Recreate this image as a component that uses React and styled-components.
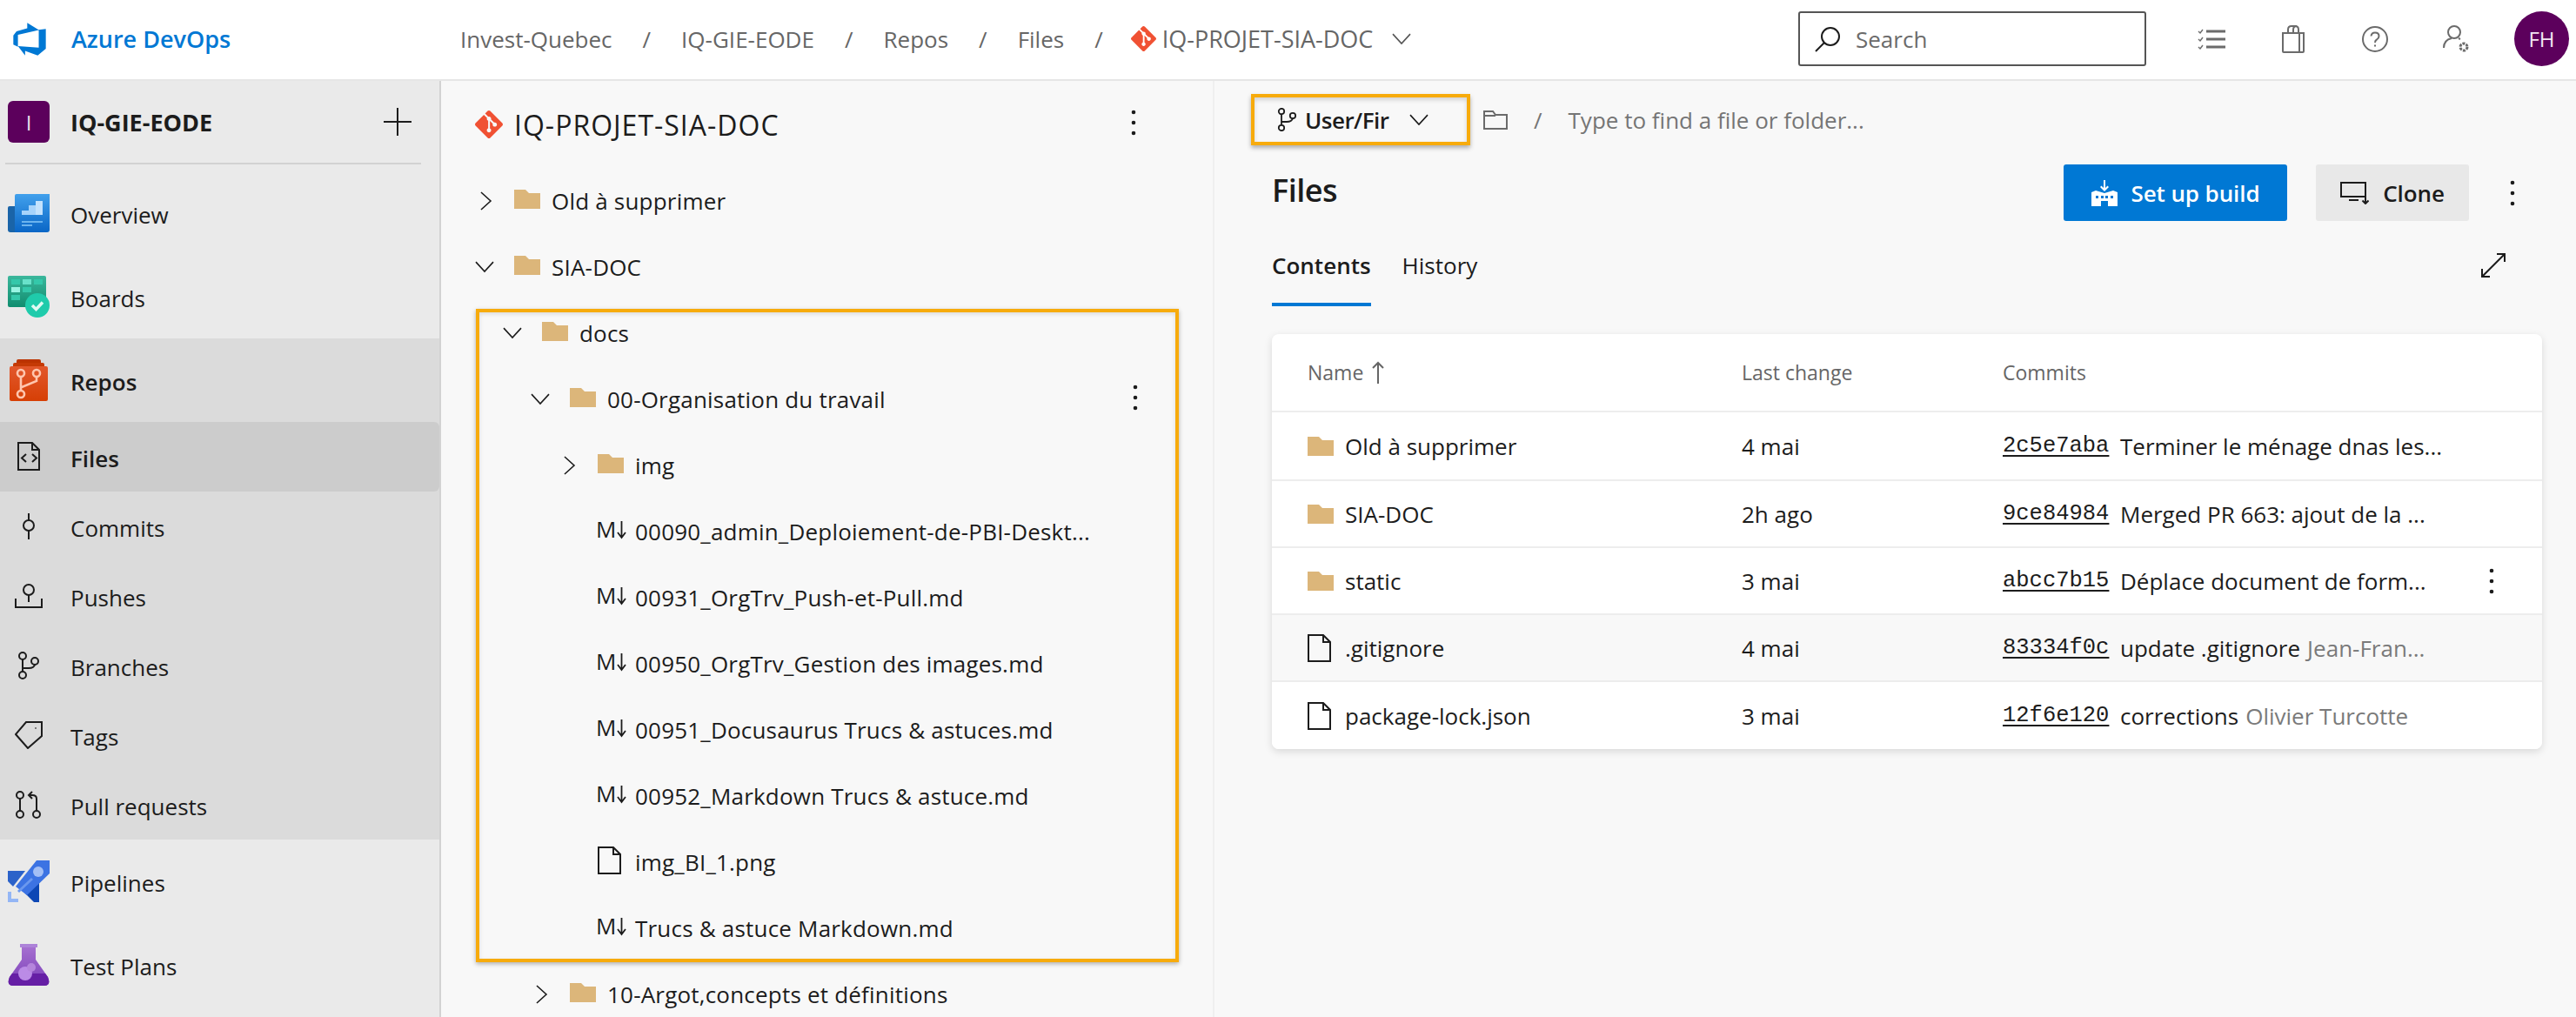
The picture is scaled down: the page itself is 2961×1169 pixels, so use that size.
import React from 'react'
import styled, { createGlobalStyle } from 'styled-components'
import { SiGit } from 'react-icons/si'

const GlobalStyle = createGlobalStyle`
  html, body {
    margin: 0;
    padding: 0;
    background: #fff;
    font-family: 'Open Sans', 'Liberation Sans', sans-serif;
    color: #1c1c1c;
  }
  * {
    box-sizing: border-box;
  }
`

const Page = styled.div`
  width: 2961px;
  height: 1169px;
  overflow: hidden;
  display: flex;
  flex-direction: column;
`

/* top bar */
const TopBar = styled.header`
  height: 93px;
  flex: none;
  display: flex;
  align-items: center;
  background: #fff;
  border-bottom: 2px solid #e6e6e6;
  padding: 0 8px 2px 13px;
`

const Brand = styled.div`
  width: 516px;
  flex: none;
  display: flex;
  align-items: center;
  gap: 27px;
  color: #0078d4;
  font-size: 27px;
  font-weight: 600;
`

const Crumbs = styled.nav`
  display: flex;
  align-items: center;
  gap: 35px;
  color: #666;
  font-size: 26px;
`

const CrumbRepo = styled.span`
  display: flex;
  align-items: center;
  gap: 7px;
  margin-left: -3px;
  font-size: 27px;
  svg:last-child {
    margin-left: 15px;
  }
`

const GitMark = styled(SiGit)`
  color: #f05133;
  flex: none;
`

const SearchBox = styled.div`
  margin-left: auto;
  width: 400px;
  height: 63px;
  display: flex;
  align-items: center;
  gap: 17px;
  padding-left: 17px;
  border: 2px solid #555;
  border-radius: 3px;
  color: #6b6b6b;
  font-size: 26px;
`

const TopIcons = styled.div`
  display: flex;
  margin-left: 28px;
`

const TopIcon = styled.div`
  width: 94px;
  display: flex;
  justify-content: center;
  align-items: center;
  color: #6b6b6b;
`

const Avatar = styled.div`
  width: 63px;
  height: 63px;
  margin-left: 19px;
  border-radius: 50%;
  background: #5c005c;
  color: #f3e6f3;
  display: flex;
  align-items: center;
  justify-content: center;
  font-size: 24px;
`

const Body = styled.div`
  flex: 1;
  min-height: 0;
  display: flex;
`

/* left navigation */
const Sidebar = styled.aside`
  width: 507px;
  flex: none;
  background: #eaeaea;
  border-right: 2px solid #d2d2d2;
  display: flex;
  flex-direction: column;
`

const ProjectRow = styled.div`
  height: 94px;
  display: flex;
  align-items: center;
  padding: 0 32px 0 9px;
  font-size: 27px;
  font-weight: 700;
  gap: 24px;
`

const ProjectBadge = styled.div`
  width: 48px;
  height: 48px;
  flex: none;
  border-radius: 6px;
  background: #5c005c;
  color: #eadcea;
  display: flex;
  align-items: center;
  justify-content: center;
  font-size: 24px;
  font-weight: 400;
`

const PlusIcon = styled.svg`
  margin-left: auto;
`

const NavDivider = styled.div`
  height: 2px;
  margin: 0 21px 8px 6px;
  background: #d2d2d2;
`

const NavGroup = styled.div`
  background: #dbdbdb;
`

const NavItem = styled.div`
  height: ${(p) => (p.$sub ? '80px' : '96px')};
  display: flex;
  align-items: center;
  font-size: 26px;
  font-weight: ${(p) => (p.$strong ? 600 : 400)};
  background: ${(p) => (p.$selected ? '#cccccc' : 'transparent')};
  border-radius: ${(p) => (p.$selected ? '0 6px 6px 0' : '0')};
`

const NavIconCell = styled.div`
  width: 81px;
  flex: none;
  display: flex;
  justify-content: center;
  padding-right: 15px;
`

const NavLabel = styled.span`
  padding-top: 4px;
`

/* tree */
const TreePanel = styled.section`
  width: 889px;
  flex: none;
  background: #f8f8f8;
  border-right: 2px solid #efefef;
  overflow: hidden;
`

const TreeTitle = styled.div`
  height: 100px;
  display: flex;
  align-items: center;
  padding: 0 88px 0 39px;
  gap: 13px;
  font-size: 32px;
  letter-spacing: 1px;
`

const Dots = ({ className }) => (
  <svg className={className} width="6" height="30" viewBox="0 0 6 30" fill="#1c1c1c">
    <circle cx="3" cy="3" r="2.3" />
    <circle cx="3" cy="15" r="2.3" />
    <circle cx="3" cy="27" r="2.3" />
  </svg>
)

const MoreButton = styled(Dots)`
  flex: none;
  margin-left: auto;
  margin-bottom: 4px;
`

const TreeList = styled.div`
  position: relative;
`

const TreeRow = styled.div`
  height: 76px;
  display: flex;
  align-items: center;
  padding-left: ${(p) => 33 + p.$level * 32}px;
  padding-right: 86px;
  font-size: 26px;
  letter-spacing: 0.2px;
  white-space: nowrap;
`

const ToggleCell = styled.div`
  width: 51px;
  flex: none;
  display: flex;
  padding-left: ${(p) => (p.$open ? 6 : 11)}px;
`

const EntryIcon = styled.div`
  width: 43px;
  flex: none;
  display: flex;
  margin-bottom: 4px;
`

const MdGlyph = styled.div`
  width: 43px;
  margin-left: -2px;
  margin-right: 2px;
  flex: none;
  display: flex;
  align-items: center;
  font-size: 26px;
  margin-bottom: 6px;
`

const Highlight = styled.div`
  position: absolute;
  top: ${(p) => p.$top}px;
  left: ${(p) => p.$left}px;
  width: ${(p) => p.$width}px;
  height: ${(p) => p.$height}px;
  border: 4px solid #f7ab0c;
  box-shadow: 0 2px 5px rgba(0, 0, 0, 0.3), inset 0 2px 5px rgba(0, 0, 0, 0.12);
  pointer-events: none;
`

/* main */
const Main = styled.main`
  flex: 1;
  min-width: 0;
  background: #f8f8f8;
  padding: 0 39px 0 66px;
`

const PathBar = styled.div`
  height: 95px;
  margin-left: -24px;
  padding-top: 15px;
  display: flex;
  align-items: flex-start;
  font-size: 26px;
  color: #757575;
`

const BranchChip = styled.div`
  width: 252px;
  height: 59px;
  flex: none;
  display: flex;
  align-items: center;
  padding-left: 26px;
  gap: 9px;
  border: 4px solid #f7ab0c;
  box-shadow: 0 3px 5px rgba(0, 0, 0, 0.3), inset 0 3px 5px rgba(0, 0, 0, 0.15);
  color: #1c1c1c;
  font-weight: 600;
  letter-spacing: -0.5px;
  svg:last-child {
    margin-left: 14px;
  }
`

const PathHint = styled.div`
  height: 59px;
  display: flex;
  align-items: center;
  margin-left: 15px;
  gap: 30px;
`

const TitleRow = styled.div`
  height: 67px;
  display: flex;
  align-items: center;
`

const PageTitle = styled.h1`
  margin: 0 0 6px;
  font-size: 36px;
  font-weight: 600;
  letter-spacing: -0.5px;
`

const Actions = styled.div`
  margin-left: auto;
  display: flex;
  align-items: center;
  padding-right: 31px;
`

const Button = styled.div`
  height: 65px;
  display: flex;
  align-items: center;
  justify-content: center;
  border-radius: 3px;
  font-size: 26px;
  font-weight: 600;
  letter-spacing: -0.1px;
  gap: 16px;
  width: ${(p) => p.$width}px;
  background: ${(p) => (p.$primary ? '#0078d4' : '#e8e8e8')};
  color: ${(p) => (p.$primary ? '#fff' : '#1c1c1c')};
  margin-right: ${(p) => p.$after}px;
`

const TabsRow = styled.div`
  height: 97px;
  margin-bottom: 32px;
  padding-top: 10px;
  display: flex;
  align-items: flex-start;
  padding-right: 42px;
`

const Tab = styled.div`
  height: 87px;
  display: flex;
  align-items: center;
  margin-right: 36px;
  font-size: 26px;
  font-weight: ${(p) => (p.$active ? 600 : 400)};
  border-bottom: 4px solid ${(p) => (p.$active ? '#0078d4' : 'transparent')};
  padding-bottom: 4px;
`

const ExpandIcon = styled.svg`
  margin-left: auto;
  margin-top: 26px;
`

const Card = styled.div`
  background: #fff;
  border-radius: 8px;
  box-shadow: 0 3px 10px rgba(0, 0, 0, 0.13);
  overflow: hidden;
`

const gridColumns = `
  display: grid;
  grid-template-columns: 499px 300px 1fr;
  align-items: center;
  padding-left: 41px;
`

const TableHead = styled.div`
  ${gridColumns}
  height: 90px;
  border-bottom: 2px solid #ededed;
  color: #666;
  font-size: 23px;
  font-weight: 500;
`

const HeadName = styled.div`
  display: flex;
  align-items: center;
  gap: 10px;
`

const TableRow = styled.div`
  ${gridColumns}
  height: 77px;
  border-bottom: 2px solid #ededed;
  font-size: 26px;
  background: ${(p) => (p.$hover ? '#f8f8f8' : '#fff')};
  &:nth-child(2) {
    height: 79px;
  }
  &:last-child {
    border-bottom: none;
  }
`

const NameCell = styled.div`
  display: flex;
  align-items: center;
`

const NameIcon = styled.div`
  width: 43px;
  flex: none;
  display: flex;
`

const CommitCell = styled.div`
  display: flex;
  align-items: center;
  white-space: nowrap;
  position: relative;
`

const Hash = styled.span`
  font-family: 'Liberation Mono', monospace;
  font-size: 25.5px;
  width: 123px;
  flex: none;
  text-decoration: underline;
  text-decoration-thickness: 2px;
  text-underline-offset: 4px;
  margin-right: 12px;
`

const Author = styled.span`
  color: #7a7a7a;
  margin-left: 8px;
`

const RowMore = styled(Dots)`
  position: absolute;
  left: 559px;
  top: 50%;
  transform: translateY(-50%);
`

/* icons, drawn in target pixels */
const Logo = () => (
  <svg width="42" height="42" viewBox="0 0 18 18" fill="#0078d4">
    <path d="M17 4v9.74l-4 3.28-6.2-2.26V17l-3.51-4.59 10.23.8V4.44zm-3.41.49L7.85 1v2.61L2.58 5.17 1 7.17v4.54l2.26 1V6.86z" />
  </svg>
)

const Folder = () => (
  <svg width="30" height="22" viewBox="0 0 30 22" fill="#dcb67a">
    <path d="M0 0H13L17 4H30V22H0Z" />
  </svg>
)

const FileIcon = () => (
  <svg width="27" height="32" viewBox="0 0 27 32" fill="none" stroke="#1c1c1c" strokeWidth="2">
    <path d="M1 1H18L26 9V31H1ZM18 1V9H26" />
  </svg>
)

const Chevron = ({ open, size = 22, color = '#1c1c1c' }) => (
  <svg width={open ? size : size * 0.68} height={open ? size * 0.6 : size} viewBox={open ? '0 0 22 13' : '0 0 13 22'} fill="none" stroke={color} strokeWidth="1.6">
    <path d={open ? 'M1 1L11 12L21 1' : 'M1 1L12 11L1 21'} />
  </svg>
)

const BranchSmall = ({ size = 27 }) => (
  <svg width={size * 0.85} height={size} viewBox="0 0 23 27" fill="none" stroke="#1c1c1c" strokeWidth="1.8">
    <circle cx="5" cy="4" r="3.2" />
    <circle cx="5" cy="23" r="3.2" />
    <circle cx="18" cy="9" r="3.2" />
    <path d="M5 7V20M5 16H11Q17 16 18 12" />
  </svg>
)

const MdIcon = () => (
  <MdGlyph>
    M
    <svg width="11" height="24" viewBox="0 0 11 24" fill="none" stroke="#1c1c1c" strokeWidth="1.8">
      <path d="M5.5 3V21M1 16L5.5 22L10 16" />
    </svg>
  </MdGlyph>
)

const OverviewIcon = () => (
  <svg width="48" height="44" viewBox="0 0 48 44">
    <defs>
      <linearGradient id="ovA" x1="0" y1="0" x2="0" y2="1">
        <stop offset="0" stopColor="#41a0ec" />
        <stop offset="1" stopColor="#0a66c6" />
      </linearGradient>
    </defs>
    <path d="M2 14H10V44H3Q0 44 0 41V16Q0 14 2 14Z" fill="#1a64a8" />
    <path d="M10 0H48V41Q48 44 45 44H8V2Q8 0 10 0Z" fill="url(#ovA)" />
    <path d="M16 19H24V13H32V8H40V24H16Z" fill="#a6d3fb" />
    <path d="M32 8H40V24H32Z" fill="#c3e2fd" />
    <path d="M16 31H40V33H16ZM16 35H28V37H16Z" fill="#6cb3ee" />
  </svg>
)

const BoardsIcon = () => (
  <svg width="48" height="48" viewBox="0 0 48 48">
    <defs>
      <linearGradient id="boA" x1="0" y1="0" x2="0" y2="1">
        <stop offset="0" stopColor="#3bb79c" />
        <stop offset="1" stopColor="#108d6f" />
      </linearGradient>
    </defs>
    <rect width="44" height="36" rx="2" fill="url(#boA)" />
    <path d="M4 4H14V10H4ZM30 4H40V10H30ZM17 13H27V19H17ZM4 22H14V28H4Z" fill="#34c8aa" />
    <path d="M17 4H27V10H17Z" fill="#69e2ca" />
    <path d="M4 13H14V19H4Z" fill="#98f4e2" />
    <circle cx="34" cy="34" r="14" fill="#1fcbab" />
    <path d="M28 34L32.5 38.5L40 30.5" fill="none" stroke="#dffaf3" strokeWidth="3.5" />
  </svg>
)

const ReposIcon = () => (
  <svg width="44" height="48" viewBox="0 0 44 48">
    <defs>
      <linearGradient id="reA" x1="0" y1="0" x2="0" y2="1">
        <stop offset="0" stopColor="#e2582c" />
        <stop offset="1" stopColor="#d63f05" />
      </linearGradient>
    </defs>
    <path d="M8 2Q8 0 10 0H34Q36 0 36 2V4H8Z" fill="#bb3300" />
    <path d="M4 6Q4 4 6 4H38Q40 4 40 6V8H4Z" fill="#c53a05" />
    <rect y="8" width="44" height="40" rx="2" fill="url(#reA)" />
    <g fill="none" stroke="#ffc6ae" strokeWidth="2.6">
      <circle cx="13" cy="16" r="4" />
      <circle cx="31" cy="16" r="4" />
      <circle cx="13" cy="40" r="4" />
      <path d="M13 20V36M14 32L31 25V20" />
    </g>
  </svg>
)

const PipelinesIcon = () => (
  <svg width="48" height="48" viewBox="0 0 48 48">
    <path d="M0 12H20L6 30L0 24Z" fill="#2b62c9" />
    <path d="M18 36L36 24V48H30Z" fill="#0d47b5" />
    <path d="M33 0H48V15L22 40L9 30Z" fill="#3c73e3" />
    <circle cx="35" cy="13" r="6" fill="#a3bff5" />
    <path d="M11 35L27 20L29 22L13 37Z" fill="#6b98ee" />
    <path d="M0 36H4V44H12V48H0Z" fill="#94b6f5" />
  </svg>
)

const TestPlansIcon = () => (
  <svg width="48" height="48" viewBox="0 0 48 48">
    <defs>
      <linearGradient id="teA" x1="0" y1="0" x2="0" y2="1">
        <stop offset="0" stopColor="#a56fd0" />
        <stop offset="1" stopColor="#7b3fb8" />
      </linearGradient>
    </defs>
    <path d="M14 0H34V4H14Z" fill="#ad83d8" />
    <path d="M16 4H32V18L46 38Q50 48 42 48H6Q-2 48 2 38L16 18Z" fill="url(#teA)" />
    <path d="M5 34H43L46 38Q50 48 42 48H6Q-2 48 2 38Z" fill="#661fa5" />
    <circle cx="20" cy="34" r="8" fill="#bb8be6" />
    <circle cx="27" cy="27" r="5" fill="#b585dc" />
  </svg>
)

const stroke = { fill: 'none', stroke: '#1c1c1c', strokeWidth: 2 }

const subIcons = {
  files: (
    <svg width="28" height="34" viewBox="0 0 28 34" {...stroke}>
      <path d="M2 1H18L26 9V32H2ZM18 1V9H26M11 14L6 18.5L11 23M18 14L23 18.5L18 23" />
    </svg>
  ),
  commits: (
    <svg width="16" height="32" viewBox="0 0 16 32" {...stroke}>
      <circle cx="8" cy="15" r="6" />
      <path d="M8 1V9M8 21V31" />
    </svg>
  ),
  pushes: (
    <svg width="32" height="28" viewBox="0 0 32 28" {...stroke}>
      <circle cx="16" cy="7" r="6" />
      <path d="M16 13V21M1 17V27H31V17" />
    </svg>
  ),
  branches: (
    <svg width="26" height="32" viewBox="0 0 26 32" {...stroke}>
      <circle cx="6" cy="5" r="4" />
      <circle cx="6" cy="27" r="4" />
      <circle cx="20" cy="11" r="4" />
      <path d="M6 9V23M6 19H13Q19 19 20 15" />
    </svg>
  ),
  tags: (
    <svg width="32" height="32" viewBox="0 0 32 32" {...stroke}>
      <path d="M13 1H31V17L15 31L1 15ZM24 7.5V8.5" />
    </svg>
  ),
  pulls: (
    <svg width="30" height="32" viewBox="0 0 30 32" {...stroke}>
      <circle cx="5" cy="5" r="4" />
      <circle cx="5" cy="27" r="4" />
      <circle cx="24" cy="27" r="4" />
      <path d="M5 9V23M24 23V9Q24 5 19 5H15M19 1L15 5L19 9" />
    </svg>
  ),
}

const gray = { fill: 'none', stroke: '#6b6b6b', strokeWidth: 2 }

const navSub = [
  ['files', 'Files', true],
  ['commits', 'Commits'],
  ['pushes', 'Pushes'],
  ['branches', 'Branches'],
  ['tags', 'Tags'],
  ['pulls', 'Pull requests'],
]

const tree = [
  { level: 0, kind: 'folder', name: 'Old à supprimer' },
  { level: 0, kind: 'folder', open: true, name: 'SIA-DOC' },
  { level: 1, kind: 'folder', open: true, name: 'docs' },
  { level: 2, kind: 'folder', open: true, name: '00-Organisation du travail', more: true },
  { level: 3, kind: 'folder', name: 'img' },
  { level: 3, kind: 'md', name: '00090_admin_Deploiement-de-PBI-Deskt...' },
  { level: 3, kind: 'md', name: '00931_OrgTrv_Push-et-Pull.md' },
  { level: 3, kind: 'md', name: '00950_OrgTrv_Gestion des images.md' },
  { level: 3, kind: 'md', name: '00951_Docusaurus Trucs & astuces.md' },
  { level: 3, kind: 'md', name: '00952_Markdown Trucs & astuce.md' },
  { level: 3, kind: 'file', name: 'img_BI_1.png' },
  { level: 3, kind: 'md', name: 'Trucs & astuce Markdown.md' },
  { level: 2, kind: 'folder', name: '10-Argot,concepts et définitions' },
]

const files = [
  { kind: 'folder', name: 'Old à supprimer', when: '4 mai', hash: '2c5e7aba', msg: 'Terminer le ménage dnas les...' },
  { kind: 'folder', name: 'SIA-DOC', when: '2h ago', hash: '9ce84984', msg: 'Merged PR 663: ajout de la ...' },
  { kind: 'folder', name: 'static', when: '3 mai', hash: 'abcc7b15', msg: 'Déplace document de form...', more: true },
  { kind: 'file', name: '.gitignore', when: '4 mai', hash: '83334f0c', msg: 'update .gitignore', author: 'Jean-Fran...', hover: true },
  { kind: 'file', name: 'package-lock.json', when: '3 mai', hash: '12f6e120', msg: 'corrections', author: 'Olivier Turcotte' },
]

export default function App() {
  return (
    <Page>
      <GlobalStyle />
      <TopBar>
        <Brand>
          <Logo />
          Azure DevOps
        </Brand>
        <Crumbs>
          <span>Invest-Quebec</span>
          <span>/</span>
          <span>IQ-GIE-EODE</span>
          <span>/</span>
          <span>Repos</span>
          <span>/</span>
          <span>Files</span>
          <span>/</span>
          <CrumbRepo>
            <GitMark size={29} />
            IQ-PROJET-SIA-DOC
            <Chevron open color="#555" />
          </CrumbRepo>
        </Crumbs>
        <SearchBox>
          <svg width="30" height="30" viewBox="0 0 30 30" fill="none" stroke="#1c1c1c" strokeWidth="2">
            <circle cx="18" cy="12" r="10" />
            <path d="M11 19L1 29" />
          </svg>
          Search
        </SearchBox>
        <TopIcons>
          <TopIcon>
            <svg width="32" height="24" viewBox="0 0 32 24" {...gray}>
              <path d="M10 3H32M10 12H32M10 21H32" strokeWidth="3" />
              <path d="M1 3L3 5L6 1M1 12L3 14L6 10M1 21L3 23L6 19" strokeWidth="1.4" />
            </svg>
          </TopIcon>
          <TopIcon>
            <svg width="26" height="32" viewBox="0 0 26 32" {...gray}>
              <path d="M1 9H25V30Q25 31 24 31H2Q1 31 1 30ZM7 9V5Q7 1 11 1H15Q19 1 19 5V9M13 9V5Q13 1 17 1M20 9V31" />
            </svg>
          </TopIcon>
          <TopIcon>
            <svg width="30" height="30" viewBox="0 0 30 30" {...gray}>
              <circle cx="15" cy="15" r="14" />
              <path d="M10.5 11.5Q11 7.5 15 7.5Q19.5 7.5 19.5 11.5Q19.5 14 17 15.5Q15 16.5 15 19M15 21.5V23.5" />
            </svg>
          </TopIcon>
          <TopIcon>
            <svg width="32" height="32" viewBox="0 0 32 32" {...gray}>
              <circle cx="13" cy="8" r="7" />
              <path d="M1 26Q1 17 10 15M18 15Q19 15.5 20 16" />
              <circle cx="24" cy="25" r="4" strokeWidth="3" strokeDasharray="3 1.2" />
            </svg>
          </TopIcon>
        </TopIcons>
        <Avatar>FH</Avatar>
      </TopBar>

      <Body>
        <Sidebar>
          <ProjectRow>
            <ProjectBadge>I</ProjectBadge>
            IQ-GIE-EODE
            <PlusIcon width="32" height="32" viewBox="0 0 32 32" stroke="#1c1c1c" strokeWidth="2">
              <path d="M16 0V32M0 16H32" />
            </PlusIcon>
          </ProjectRow>
          <NavDivider />
          <NavItem>
            <NavIconCell><OverviewIcon /></NavIconCell>
            <NavLabel>Overview</NavLabel>
          </NavItem>
          <NavItem>
            <NavIconCell><BoardsIcon /></NavIconCell>
            <NavLabel>Boards</NavLabel>
          </NavItem>
          <NavGroup>
            <NavItem $strong>
              <NavIconCell><ReposIcon /></NavIconCell>
              <NavLabel>Repos</NavLabel>
            </NavItem>
            {navSub.map(([key, label, selected]) => (
              <NavItem key={key} $sub $selected={selected} $strong={selected}>
                <NavIconCell>{subIcons[key]}</NavIconCell>
                <NavLabel>{label}</NavLabel>
              </NavItem>
            ))}
          </NavGroup>
          <NavItem>
            <NavIconCell><PipelinesIcon /></NavIconCell>
            <NavLabel>Pipelines</NavLabel>
          </NavItem>
          <NavItem>
            <NavIconCell><TestPlansIcon /></NavIconCell>
            <NavLabel>Test Plans</NavLabel>
          </NavItem>
        </Sidebar>

        <TreePanel>
          <TreeTitle>
            <GitMark size={32} />
            IQ-PROJET-SIA-DOC
            <MoreButton />
          </TreeTitle>
          <TreeList>
            {tree.map((row) => (
              <TreeRow key={row.name} $level={row.level}>
                {row.kind === 'md' ? (
                  <>
                    <ToggleCell $open />
                    <MdIcon />
                  </>
                ) : (
                  <>
                    <ToggleCell $open={row.open}>{row.kind === 'folder' && <Chevron open={row.open} />}</ToggleCell>
                    <EntryIcon>{row.kind === 'folder' ? <Folder /> : <FileIcon />}</EntryIcon>
                  </>
                )}
                {row.name}
                {row.more && <MoreButton />}
              </TreeRow>
            ))}
            <Highlight $top={162} $left={40} $width={808} $height={751} />
          </TreeList>
        </TreePanel>

        <Main>
          <PathBar>
            <BranchChip>
              <BranchSmall />
              User/Fir
              <Chevron open />
            </BranchChip>
            <PathHint>
              <svg width="28" height="22" viewBox="0 0 28 22" fill="none" stroke="#6b6b6b" strokeWidth="2">
                <path d="M1 1H11L14 5H27V21H1ZM1 6H14" />
              </svg>
              <span>/</span>
              <span>Type to find a file or folder...</span>
            </PathHint>
          </PathBar>
          <TitleRow>
            <PageTitle>Files</PageTitle>
            <Actions>
              <Button $primary $width={257} $after={33}>
                <svg width="30" height="30" viewBox="0 0 30 30" fill="#fff">
                  <path d="M14 0H16V9L18.500 6.500L20 8L15 13L10 8L11.500 6.500L14 9ZM0 14L5 12L15 15L25 12L30 14V30H19V24H11V30H0ZM5 18V21H8V18ZM11 18V21H14V18ZM16 18V21H19V18ZM22 18V21H25V18Z" />
                </svg>
                Set up build
              </Button>
              <Button $width={176} $after={47}>
                <svg width="33" height="26" viewBox="0 0 33 26" fill="none" stroke="#1c1c1c" strokeWidth="2">
                  <path d="M1 1H29V17H1ZM10 21H21M29 12V25M25.500 21.500L29 25L32.500 21.500" />
                </svg>
                Clone
              </Button>
              <Dots />
            </Actions>
          </TitleRow>
          <TabsRow>
            <Tab $active>Contents</Tab>
            <Tab>History</Tab>
            <ExpandIcon width="28" height="28" viewBox="0 0 28 28" fill="none" stroke="#1c1c1c" strokeWidth="2">
              <path d="M2 26L26 2M18 1H27V10M1 18V27H10" />
            </ExpandIcon>
          </TabsRow>
          <Card>
            <TableHead>
              <HeadName>
                Name
                <svg width="14" height="26" viewBox="0 0 14 26" fill="none" stroke="#666" strokeWidth="2">
                  <path d="M7 2V26M1 8L7 2L13 8" />
                </svg>
              </HeadName>
              <div>Last change</div>
              <div>Commits</div>
            </TableHead>
            {files.map((f) => (
              <TableRow key={f.name} $hover={f.hover}>
                <NameCell>
                  <NameIcon>{f.kind === 'folder' ? <Folder /> : <FileIcon />}</NameIcon>
                  {f.name}
                </NameCell>
                <div>{f.when}</div>
                <CommitCell>
                  <Hash>{f.hash}</Hash>
                  {f.msg}
                  {f.author && <Author>{f.author}</Author>}
                  {f.more && <RowMore />}
                </CommitCell>
              </TableRow>
            ))}
          </Card>
        </Main>
      </Body>
    </Page>
  )
}
